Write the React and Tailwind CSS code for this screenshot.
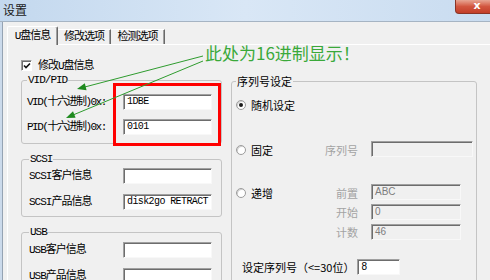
import React from "react";

const SIM = "font-['Liberation_Mono','Noto_Sans_CJK_SC',monospace] text-[11px] leading-[12px] tracking-[-1px]";
const SIMT = "font-['Liberation_Mono','Noto_Sans_CJK_SC',monospace] text-[11px] leading-[12px] tracking-[-1.5px]";
const NOTO = "font-['Noto_Sans_CJK_SC','Noto_Sans',sans-serif] text-[11px] leading-[12px]";

function Field({ w, value, disabled, kind }) {
  const font =
    kind === "mono"
      ? "font-['Liberation_Mono',monospace] text-[10px] tracking-[-0.6px] text-black"
      : disabled
      ? "font-['Liberation_Sans',sans-serif] text-[10px] text-[#7d7d7d]"
      : "font-['Liberation_Sans',sans-serif] text-[10px] text-black";
  return (
    <div
      className={`${w} h-[16px] shrink-0 border border-t-[#a0a0a0] border-l-[#a0a0a0] border-r-[#f8f8f8] border-b-[#f8f8f8] shadow-[inset_1px_1px_0_#6d6d6d] ${
        disabled ? "bg-[#f0f0f0]" : "bg-white"
      } flex items-center pl-[3px] leading-[12px] ${font}`}
    >
      {value}
    </div>
  );
}

function Radio({ checked }) {
  return (
    <span className="w-[10px] h-[10px] shrink-0 rounded-full border border-[#9c9c9c] bg-white shadow-[inset_1px_1px_0_#d0d0d0] flex items-center justify-center">
      {checked && <span className="w-[4px] h-[4px] rounded-full bg-[#1a1a1a]" />}
    </span>
  );
}

function Row({ label, children, tight }) {
  return (
    <div className="flex items-center justify-between h-[16px]">
      <span className={tight ? SIMT : SIM}>{label}</span>
      {children}
    </div>
  );
}

export default function App() {
  return (
    <div className="relative w-[490px] h-[280px] overflow-hidden bg-[#f0f0f0] text-black">
      {/* title bar */}
      <div className="flex items-start h-[21px] bg-gradient-to-r from-[#c3d8ee] via-[#d9e7f6] to-[#c9dcf0]">
        <span className="ml-[3px] mt-[3px] font-['Noto_Sans_CJK_SC',sans-serif] text-[12px] leading-[13px] text-[#1b1b1b]">
          设置
        </span>
        <div className="ml-auto -mr-[9px] w-[44px] h-[14px] rounded-bl-[4px] border border-t-0 border-[#8a3426] bg-gradient-to-b from-[#e7a593] via-[#d2563f] to-[#c23e28] flex items-center justify-center">
          <span className="font-['DejaVu_Sans',sans-serif] text-[11px] leading-[11px] font-bold text-white -mt-[2px]">
            x
          </span>
        </div>
      </div>

      {/* body */}
      <div className="flex h-[259px] border-t border-[#a6b4c3]">
        <div className="w-[2px] bg-[#cbdaeb]" />
        <div className="w-px bg-[#95a3b3]" />
        <div className="flex-1 flex flex-col pl-[4px] pt-[4px]">
          {/* tabs */}
          <div className="flex items-end h-[18px]">
            <div className={`relative z-10 h-[19px] -mb-px w-[51px] bg-[#f0f0f0] border-t border-l border-white border-r border-r-[#696969] shadow-[inset_-1px_0_0_#a0a0a0] rounded-t-[2px] flex items-center justify-center pb-[1px] ${SIM}`}>
              U盘信息
            </div>
            <div className={`h-[15px] w-[53px] border-t border-white border-r border-r-[#696969] shadow-[inset_-1px_0_0_#a0a0a0] flex items-center justify-center ${SIM}`}>
              修改选项
            </div>
            <div className={`h-[15px] w-[54px] border-t border-white border-r border-r-[#696969] shadow-[inset_-1px_0_0_#a0a0a0] flex items-center justify-center ${SIM}`}>
              检测选项
            </div>
          </div>

          {/* panel */}
          <div className="flex-1 border-t border-l border-white pl-[13px] pt-[15px]">
            <div className="flex items-center h-[11px] gap-[6px]">
              <span className="w-[11px] h-[11px] border border-t-[#a0a0a0] border-l-[#a0a0a0] border-r-white border-b-white shadow-[inset_1px_1px_0_#6d6d6d] bg-white flex items-center justify-center">
                <svg width="8" height="8" viewBox="0 0 8 8">
                  <path d="M1 3.5 L3 5.5 L7 1.5" stroke="#111" strokeWidth="1.6" fill="none" />
                </svg>
              </span>
              <span className={SIM}>修改U盘信息</span>
            </div>

            <div className="flex items-start mt-[3px]">
              {/* left column */}
              <div className="w-[201px] flex flex-col">
                <fieldset className="border border-[#c4c4c4] rounded-[3px] pt-[8px] pb-[8px] pl-[5px] pr-[9px]">
                  <legend className={`px-[1px] ${SIM}`}>VID/PID</legend>
                  <div className="flex flex-col gap-[9px]">
                    <Row label="VID(十六进制)0x:" tight>
                      <Field w="w-[89px]" value="1DBE" kind="mono" />
                    </Row>
                    <Row label="PID(十六进制)0x:" tight>
                      <Field w="w-[89px]" value="0101" kind="mono" />
                    </Row>
                  </div>
                </fieldset>
                <fieldset className="mt-[9px] border border-[#c4c4c4] rounded-[3px] pt-[3px] pb-[6px] pl-[7px] pr-[9px]">
                  <legend className={`px-[1px] ${SIM}`}>SCSI</legend>
                  <div className="flex flex-col gap-[10px]">
                    <Row label="SCSI客户信息">
                      <Field w="w-[89px]" value="" kind="mono" />
                    </Row>
                    <Row label="SCSI产品信息">
                      <Field w="w-[89px]" value="disk2go RETRACT" kind="mono" />
                    </Row>
                  </div>
                </fieldset>
                <fieldset className="mt-[9px] border border-[#c4c4c4] rounded-[3px] pt-[4px] pb-[6px] pl-[7px] pr-[9px]">
                  <legend className={`px-[1px] ${SIM}`}>USB</legend>
                  <div className="flex flex-col gap-[10px]">
                    <Row label="USB客户信息">
                      <Field w="w-[89px]" value="" kind="mono" />
                    </Row>
                    <Row label="USB产品信息">
                      <Field w="w-[89px]" value="" kind="mono" />
                    </Row>
                  </div>
                </fieldset>
              </div>

              {/* right column */}
              <fieldset className="ml-[9px] mt-[1px] w-[246px] h-[230px] border border-[#c4c4c4] rounded-[3px] pl-[4px] pr-[3px]">
                <legend className={`px-[1px] ${NOTO}`}>序列号设定</legend>
                <div className="flex flex-col">
                  <div className="mt-[12px] h-[12px] flex items-center gap-[5px]">
                    <Radio checked />
                    <span className={NOTO}>随机设定</span>
                  </div>

                  <div className="mt-[30px] grid grid-cols-[122px_1fr] gap-x-[13px] items-center h-[16px]">
                    <div className="flex items-center justify-between">
                      <div className="flex items-center gap-[5px] mt-[2px]">
                        <Radio />
                        <span className={NOTO}>固定</span>
                      </div>
                      <span className={`${NOTO} text-[#a3a3a3] mt-[2px]`}>序列号</span>
                    </div>
                    <Field w="w-[102px]" value="" disabled />
                  </div>

                  <div className="mt-[27px] grid grid-cols-[122px_1fr] gap-x-[13px] gap-y-[4px] items-center">
                    <div className="flex items-center justify-between h-[16px]">
                      <div className="flex items-center gap-[5px] mt-[1px]">
                        <Radio />
                        <span className={NOTO}>递增</span>
                      </div>
                      <span className={`${NOTO} text-[#a3a3a3] mt-[1px]`}>前置</span>
                    </div>
                    <Field w="w-[90px]" value="ABC" disabled />
                    <div className="flex items-center justify-end h-[16px]">
                      <span className={`${NOTO} text-[#a3a3a3]`}>开始</span>
                    </div>
                    <Field w="w-[90px]" value="0" disabled />
                    <div className="flex items-center justify-end h-[16px]">
                      <span className={`${NOTO} text-[#a3a3a3]`}>计数</span>
                    </div>
                    <Field w="w-[90px]" value="46" disabled />
                  </div>

                  <div className="mt-[19px] ml-[6px] flex items-center h-[16px] gap-[3px]">
                    <span className={NOTO}>设定序列号（&lt;=30位）</span>
                    <Field w="w-[43px]" value="8" />
                  </div>
                </div>
              </fieldset>
            </div>
          </div>
        </div>
      </div>

      {/* annotation overlays */}
      <div className="absolute left-[113px] top-[83px] w-[108px] h-[63px] border-[3px] border-[#ff0000]" />
      <div className="absolute left-[205px] top-[43px] font-['Noto_Sans_CJK_SC',sans-serif] text-[17px] leading-[19px] text-[#3aa93a] whitespace-nowrap">
        此处为16进制显示！
      </div>
      <svg className="absolute left-0 top-0 pointer-events-none" width="490" height="280" viewBox="0 0 490 280">
        <line x1="203" y1="56" x2="84" y2="87.2" stroke="#2f9c2f" strokeWidth="1" />
        <polygon points="77,89 86.6,90.3 84.8,83.3" fill="#1f8a1f" />
        <line x1="203" y1="61" x2="73" y2="115" stroke="#2f9c2f" strokeWidth="1" />
        <polygon points="66,118 75.6,117.7 73,111.3" fill="#1f8a1f" />
      </svg>
    </div>
  );
}
